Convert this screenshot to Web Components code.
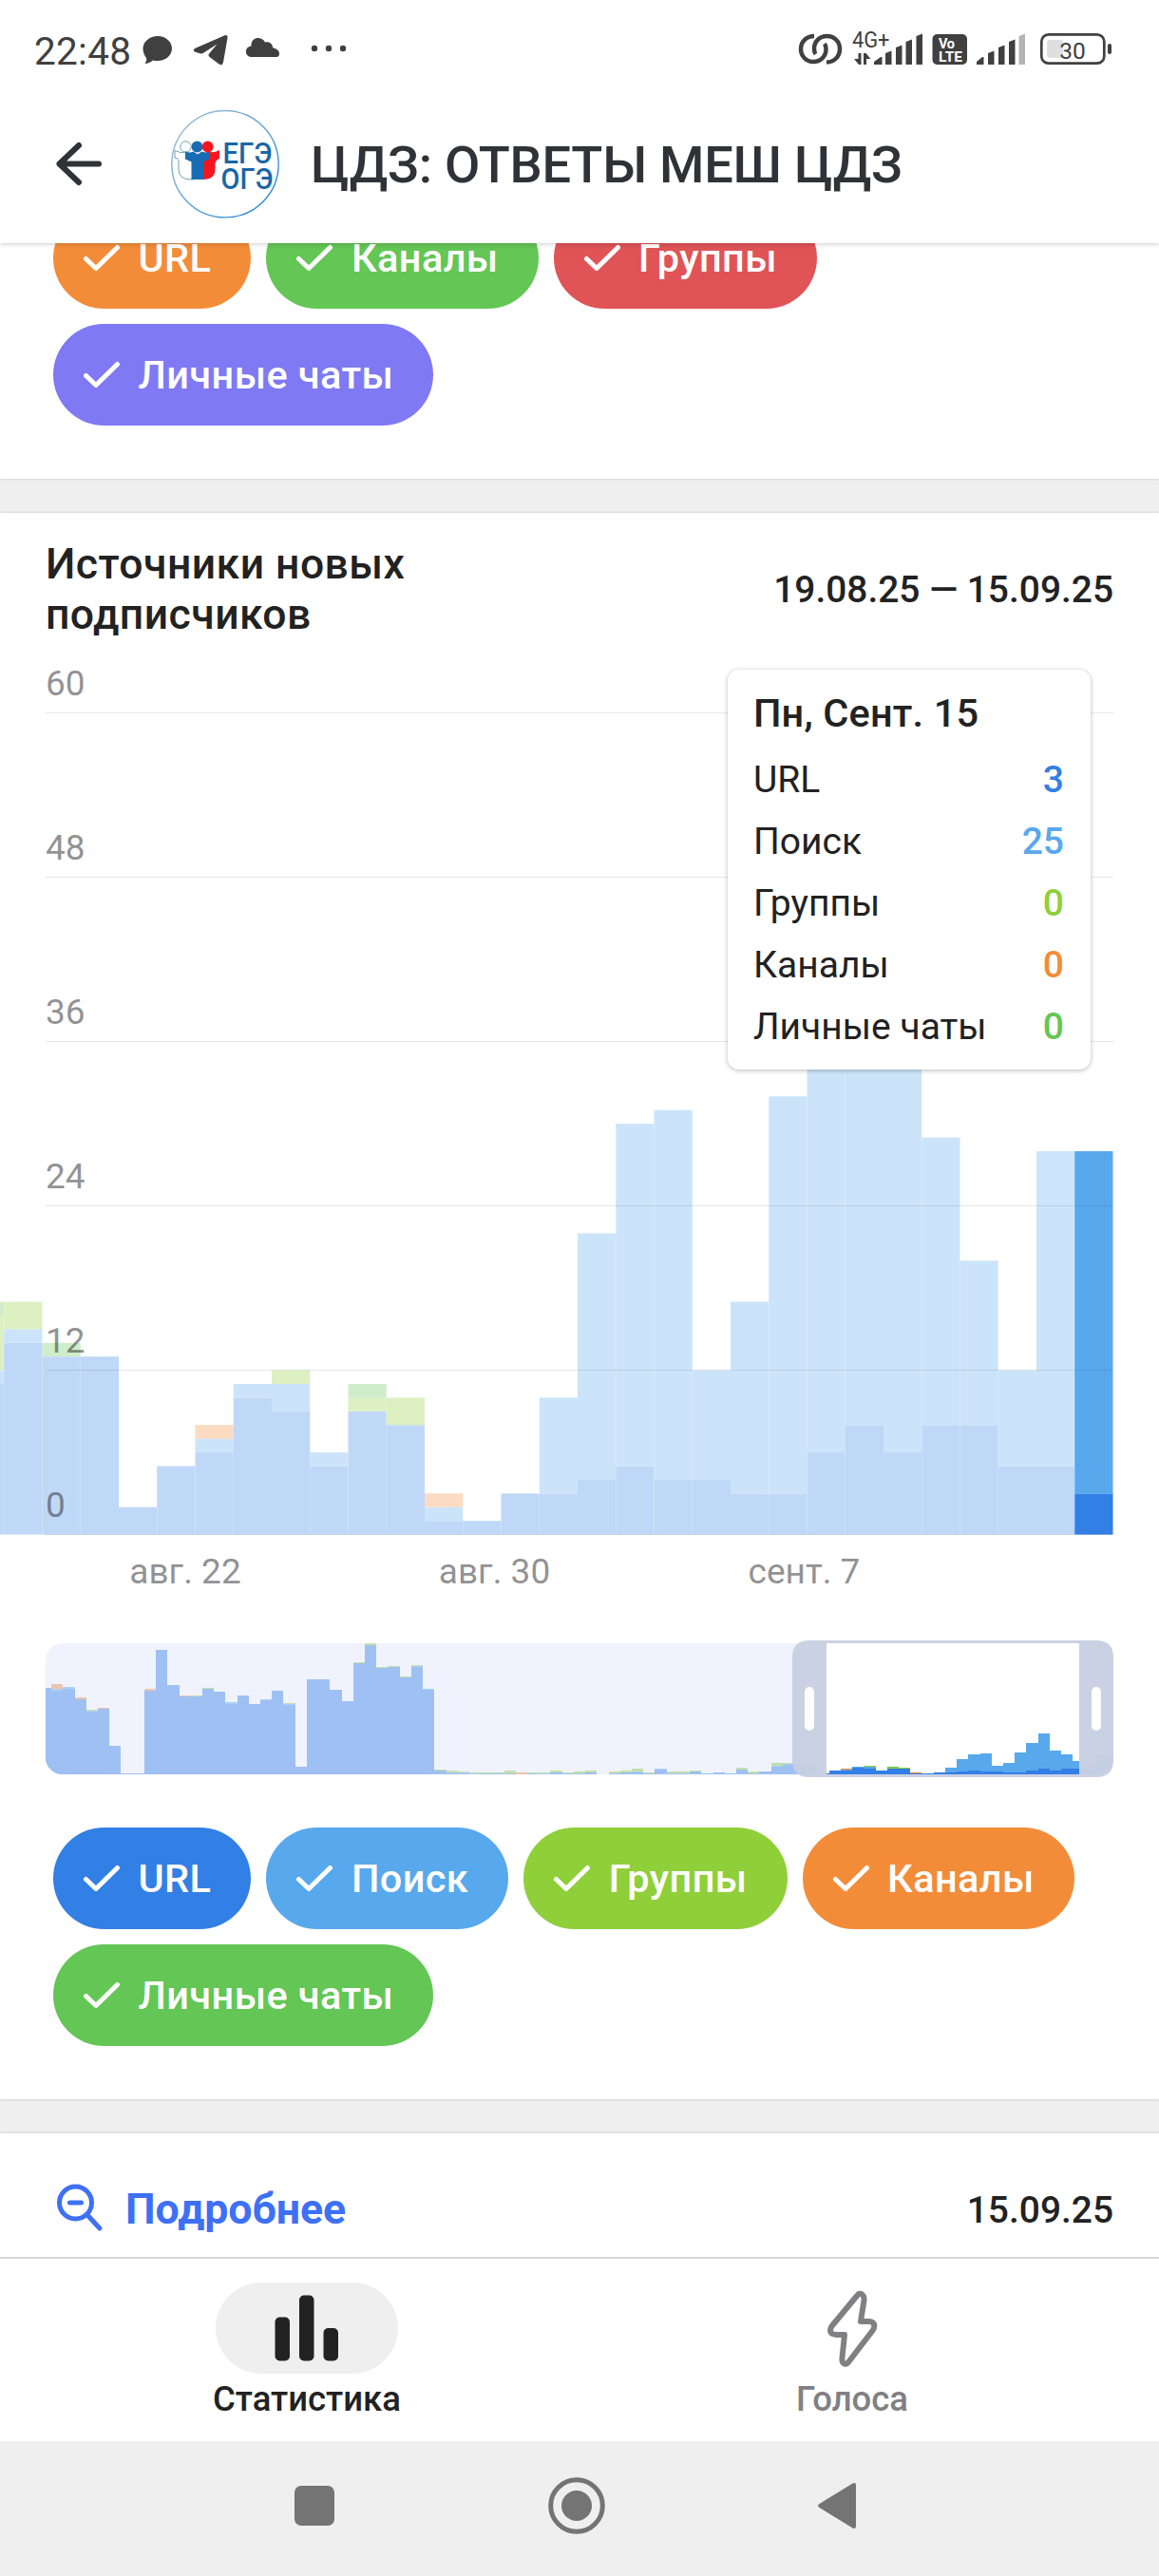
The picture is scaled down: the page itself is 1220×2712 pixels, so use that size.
<!DOCTYPE html>
<html lang="ru">
<head>
<meta charset="utf-8">
<title>Статистика</title>
<style>
  body {
    margin: 0;
    background: #fff;
    color: #222;
    font-family: Roboto, "Noto Sans", sans-serif;
  }
</style>
</head>
<body>

<stats-screen>
  <status-bar slot="top"></status-bar>
  <app-header slot="top">ЦДЗ: ОТВЕТЫ МЕШ ЦДЗ</app-header>

  <stats-card scrolled>
    <chip-list>
      <source-chip color="#f38c39">URL</source-chip>
      <source-chip color="#63c655">Каналы</source-chip>
      <source-chip color="#e05356">Группы</source-chip>
      <source-chip color="#7f79f3">Личные чаты</source-chip>
    </chip-list>
  </stats-card>

  <stats-card>
    <card-title range="19.08.25 — 15.09.25">Источники новых подписчиков</card-title>
    <sources-chart>
      <chart-tooltip>
        <span slot="title">Пн, Сент. 15</span>
        <tooltip-row value="3" color="#327fe5">URL</tooltip-row>
        <tooltip-row value="25" color="#58a8ed">Поиск</tooltip-row>
        <tooltip-row value="0" color="#8fcf39">Группы</tooltip-row>
        <tooltip-row value="0" color="#f38c39">Каналы</tooltip-row>
        <tooltip-row value="0" color="#63c655">Личные чаты</tooltip-row>
      </chart-tooltip>
    </sources-chart>
    <range-map></range-map>
    <chip-list>
      <source-chip color="#327fe5">URL</source-chip>
      <source-chip color="#58a8ed">Поиск</source-chip>
      <source-chip color="#8fcf39">Группы</source-chip>
      <source-chip color="#f38c39">Каналы</source-chip>
      <source-chip color="#63c655">Личные чаты</source-chip>
    </chip-list>
  </stats-card>

  <stats-card>
    <zoom-out-row date="15.09.25">Подробнее</zoom-out-row>
  </stats-card>

  <tab-bar slot="bottom">
    <tab-item active>
      <svg slot="icon" width="68" height="70" viewBox="0 0 68 70" fill="#222">
        <rect x="0.5" y="23.5" width="15.5" height="46" rx="5"/>
        <rect x="26" y="0.5" width="15.5" height="69" rx="5"/>
        <rect x="51.5" y="35" width="15.5" height="34.5" rx="5"/>
      </svg>
      Статистика
    </tab-item>
    <tab-item>
      <svg slot="icon" width="56" height="84" viewBox="0 0 56 84" fill="none" stroke="#808084" stroke-width="6" stroke-linejoin="round">
        <path d="M33 8 Q36 4 39 7 Q41 9 40.5 13 L37 35 H46 Q54 36 50 44 L24 78 Q21 81.5 18.5 78.5 Q17 77 17.5 73 L20 49 H11 Q2 48 6.5 40 Z"/>
      </svg>
      Голоса
    </tab-item>
  </tab-bar>
  <system-nav slot="bottom"></system-nav>
</stats-screen>

<script>
// attaches an open shadow root filled with the given markup
class BaseElement extends HTMLElement {
  constructor() {
    super();
    const template = document.createElement("template");
    template.innerHTML = this.render();
    this.attachShadow({ mode: "open" }).append(template.content.cloneNode(true));
  }
}

const COLORS = {
  url: "#327fe5",
  search: "#58a8ed",
  groups: "#8fcf39",
  channels: "#f38c39",
  personal: "#63c655",
};
const KEYS = ["url", "search", "groups", "channels", "personal"];

// url, search, groups, channels, personal for each day
const DAYS = [
  [11, 1, 4, 0, 1], [14, 1, 2], [13, 0, 0, 0, 1], [13], [2], [5],
  [6, 1, 0, 1], [10, 1], [9, 2, 1], [5, 1], [9, 0, 1, 0, 1], [8, 0, 2],
  [1, 1, 0, 1], [1], [3], [3, 7], [4, 18], [5, 25], [4, 27], [4, 8],
  [3, 14], [3, 29], [6, 40], [8, 52], [6, 29], [8, 21], [8, 12],
  [5, 7], [5, 23], [3, 25],
];

// earlier days, only visible on the map
const HISTORY = [
  [127], [123, 3, 0, 7], [126, 2, 0, 1], [110, 0, 0, 3], [93, 1, 1], [96, 0, 0, 1.5],
  [42], [1], [1], [123, 0, 0, 3], [183], [131], [114, 0, 0, 1.5], [114, 0, 1.5],
  [126, 0, 1.5], [121], [104, 2], [116], [104], [109, 1.5], [123], [102, 1.5, 1.5],
  [11], [139.5], [139.5], [124], [107], [163, 0.5, 1], [190, 0, 3], [156, 0, 1.5],
  [158, 0.7, 0.7], [142, 0, 1.5], [158, 1.5, 1.5], [124, 1.5], [5.5, 0, 1.3],
  [1.3, 1, 3], [1.3, 1, 1.5], [0.7, 1.3, 0.7], [1.3, 0.7, 0.5], [1.3, 0.7, 0.5],
  [1.3, 0.5, 3.3], [0.7, 0, 0, 1.5], [1.3, 0.7, 0.5], [0.7, 1.3, 0.5], [2.6, 0, 2.6],
  [1.3, 0.7, 0.5], [1.3, 0.5, 2], [2.5, 0, 2.7], [0], [1.3, 0.5, 2], [2.5, 0, 2.7],
  [2.6, 1, 4.5], [1.3, 0, 1.3], [6.5, 1.5], [1.2, 0.5, 2.3], [1.2, 0.5, 2.3],
  [4, 0, 1.3], [1.2], [2.5], [1.2], [6.5, 1.2, 1.7], [1.2, 0.5, 2.3], [4],
];

function stackedBars(days, left, width, base, unit) {
  let out = "";
  days.forEach((day, i) => {
    let y = base;
    day.forEach((value, k) => {
      if (!value) return;
      const h = value * unit;
      y -= h;
      out += `<rect x="${(left + i * width).toFixed(2)}" y="${y.toFixed(2)}" width="${width.toFixed(2)}" height="${h.toFixed(2)}" fill="${COLORS[KEYS[k]]}"/>`;
    });
  });
  return out;
}

class StatsScreen extends BaseElement {
  render() {
    return `
<style>
  :host { display: flex; flex-direction: column; width: 1220px; height: 2712px; overflow: hidden; background: #fff; }
  header { flex: none; position: relative; z-index: 1; height: 256px; background: #fff; box-shadow: 0 1px 5px rgba(0, 0, 0, .2); }
  main { flex: 1; min-height: 0; overflow: hidden; display: flex; flex-direction: column; gap: 36px; background: #efefef; }
  footer { flex: none; }
</style>
<header><slot name="top"></slot></header>
<main><slot></slot></main>
<footer><slot name="bottom"></slot></footer>`;
  }
}

class StatusBar extends BaseElement {
  render() {
    return `
<style>
  :host { display: flex; align-items: center; height: 90px; padding: 0 48px 0 36px; color: #404040; box-sizing: border-box; }
  .time { font-size: 40.5px; letter-spacing: .3px; line-height: 50px; width: 112px; padding-top: 18px; }
  .right { margin-left: auto; }
  svg { display: block; }
</style>
<span class="time">22:48</span>
<svg width="222" height="90" viewBox="148 0 222 90" fill="#404040">
  <path d="M166 38c8.5 0 15 6 15 13s-6.5 13-15 13c-2 0-3.5 0-5-.5-2.5 2-5.5 3.500-8.500 3.500 1.500-2 2-4 1.500-6-2-2.500-3.500-6-3.500-10 0-7 7-13 15.500-13z"/>
  <path d="M205 51 L236 37.5 Q240 36 239.5 40 L235 65.5 Q234 70 230 67 L220.5 60 Q218.5 58 220.5 56 L228.5 46.5 L214.5 55.5 Q212 57 209.5 56 L205 54.5 Q202.5 53 205 51z"/>
  <path d="M265 60c-8 0-8-11-.5-11.5C264 38 276 38 279 44.500c5-1 8 2 8 5.500 3 1 7 2.500 7 6.500 0 2.500-1 3.500-3 3.500z"/>
  <circle cx="331" cy="51" r="3.200"/><circle cx="346" cy="51" r="3.200"/><circle cx="361" cy="51" r="3.200"/>
</svg>
<svg class="right" width="334" height="90" viewBox="838 0 334 90" fill="#404040" font-family="Roboto, sans-serif">
  <g fill="none" stroke="#404040" stroke-width="4.5">
    <path d="M857 38c-8 0-14 6-14 13.5 0 8 6 13.5 13 13.5 8 0 13.5-6 13.5-13 0-2.500-.5-4.500-1.500-6"/>
    <path d="M870 65.500c8 0 14-6 14-14 0-8-6-13.500-13.500-13.500-8 0-13.500 6-13.500 13 0 2.500.5 4.500 1.500 6"/>
  </g>
  <text x="897" y="49.500" font-size="23" textLength="39.5" lengthAdjust="spacingAndGlyphs">4G+</text>
  <path d="M899 62h4.500v-6h3v12h-2.500zM909 56h2.500l5 6h-4.500v6h-3z"/>
  <path d="M920 68v-3l7-5h1.500v8zM932 68V56l6.500-2.500V68zM943 68V50l6.500-2.500V68zM953.500 68V44l6.500-2.500V68zM964.500 68V38l6.500-2.500V68z"/>
  <rect x="981.5" y="36" width="36.5" height="32" rx="5"/>
  <g fill="#fff" font-weight="700">
    <text x="988" y="50.5" font-size="14.5" textLength="17">Vo</text>
    <text x="988" y="64.5" font-size="15.5" textLength="25" lengthAdjust="spacingAndGlyphs">LTE</text>
  </g>
  <path d="M1028 68v-3l6-5h1.500v8zM1040 68V56l6.500-2.500V68zM1051 68V50l6.500-2.500V68zM1062 68V44l6.500-2.500V68z"/>
  <path d="M1072.500 68V38l6.500-2.500V68z" fill="#b4b4b4"/>
  <rect x="1096.3" y="36.3" width="66" height="30.4" rx="7.5" fill="none" stroke="#404040" stroke-width="2.7"/>
  <rect x="1102" y="42" width="17" height="19" rx="3" fill="#dfdfdf"/>
  <rect x="1166" y="46" width="4" height="11" rx="2"/>
  <text x="1129" y="61.5" font-size="24.5" text-anchor="middle">30</text>
</svg>`;
  }
}

class AppHeader extends BaseElement {
  render() {
    return `
<style>
  :host { display: flex; align-items: center; height: 166px; padding-left: 58px; box-sizing: border-box; }
  .back { margin-right: 70px; }
  .avatar { margin-right: 31px; }
  h1 { margin: 2px 0 0; font-size: 54.2px; letter-spacing: -.25px; line-height: 64px; font-weight: 500; color: #313238; white-space: nowrap; }
</style>
<svg class="back" width="50" height="50" viewBox="0 0 50 50" fill="none" stroke="#313238" stroke-width="6" stroke-linecap="round" stroke-linejoin="round">
  <path d="M4.5 24.5H46M25 5 4.5 24.5 25 44"/>
</svg>
<svg class="avatar" width="118" height="118" viewBox="178 114 118 118">
  <defs>
    <linearGradient id="ring" x1="0" y1="0" x2="1" y2="1">
      <stop offset="0" stop-color="#a5c4d6"/><stop offset="1" stop-color="#1b7fd0"/>
    </linearGradient>
  </defs>
  <circle cx="237" cy="172.7" r="56.2" fill="#fff" stroke="url(#ring)" stroke-width="1.4"/>
  <g fill="#fff" stroke="#6f9fae" stroke-width="1">
    <circle cx="195.5" cy="154.5" r="5.7"/>
    <path d="M184 158.500q6 3.500 13 1.500l6 5v24h-2q-13 0-13-11v-9q-1-3-4-3z"/>
  </g>
  <path d="M231 158q-6 3.500-12.500 1.500l-8 6v23.500h3q13 0 13-11v-6q1-4 4.500-5z" fill="#f5151f"/>
  <path d="M195 159.500q5 2 8.500 0l4.500 3 4.500-3q4 2 8 0v8l-6.500 3V189h-12.500v-18.500l-6.500-3z" fill="#176cb4"/>
  <circle cx="207.5" cy="154.5" r="5.9" fill="#176cb4"/>
  <circle cx="218.7" cy="154.5" r="5.9" fill="#f5151f"/>
  <g fill="#1a66a6" font-family="Roboto, sans-serif" font-weight="500" font-size="30.5">
    <text x="234.5" y="172" textLength="52" lengthAdjust="spacingAndGlyphs">ЕГЭ</text>
    <text x="232.5" y="199.2" textLength="55" lengthAdjust="spacingAndGlyphs">ОГЭ</text>
  </g>
</svg>
<h1><slot></slot></h1>`;
  }
}

class StatsCard extends BaseElement {
  render() {
    return `
<style>
  :host { display: block; flex: none; background: #fff; box-shadow: 0 0 3px rgba(0, 0, 0, .2); }
  :host([scrolled]) { margin-top: -38px; }
</style>
<slot></slot>`;
  }
}

class ChipList extends BaseElement {
  render() {
    return `
<style>
  :host { display: flex; flex-wrap: wrap; gap: 16px; padding: 0 56px 56px; }
</style>
<slot></slot>`;
  }
}

class SourceChip extends BaseElement {
  render() {
    return `
<style>
  :host { display: flex; align-items: center; height: 107px; padding: 0 42px 0 31px; box-sizing: border-box;
    border-radius: 54px; background: ${this.getAttribute("color")}; color: #fff;
    font-size: 41.5px; letter-spacing: .4px; font-weight: 500; line-height: 50px; white-space: nowrap; }
  svg { margin-right: 18.5px; }
</style>
<svg width="40" height="30" viewBox="0 0 40 30" fill="none" stroke="#fff" stroke-width="5" stroke-linecap="round" stroke-linejoin="round">
  <path d="M3.5 15.5 14 25.5 36.5 3.5"/>
</svg>
<slot></slot>`;
  }
}

class CardTitle extends BaseElement {
  render() {
    return `
<style>
  :host { display: flex; align-items: center; justify-content: space-between; height: 134px; padding: 27px 48px 0; box-sizing: border-box; }
  h2 { margin: 0; width: 480px; font-size: 44.5px; letter-spacing: .45px; line-height: 53px; font-weight: 500; }
  span { font-size: 38.9px; font-weight: 500; white-space: nowrap; }
</style>
<h2><slot></slot></h2>
<span>${this.getAttribute("range")}</span>`;
  }
}

class SourcesChart extends BaseElement {
  render() {
    const base = 941.6;
    const unit = 14.417;
    const width = 40.25;
    const left = 1171.5 - width * DAYS.length;
    const grid = [0, 12, 24, 36, 48, 60].map(v => {
      const y = base - v * unit;
      return `<rect x="48" y="${Math.floor(y)}" width="1124" height="1" fill="rgba(24,45,59,.11)"/>
        <text x="48" y="${(y - 18.5).toFixed(1)}">${v}</text>`;
    }).join("");
    const last = DAYS.length - 1;
    return `
<style>
  :host { display: block; position: relative; }
  svg { display: block; }
  text { font-size: 37px; fill: #252529; fill-opacity: .5; }
  ::slotted(chart-tooltip) { position: absolute; left: 766px; top: 31px; }
</style>
<svg width="1220" height="1050" viewBox="0 0 1220 1050">
  <g opacity=".3">${stackedBars(DAYS.slice(0, last), left, width, base, unit)}</g>
  ${stackedBars([DAYS[last]], left + last * width, width, base, unit)}
  ${grid}
  <g text-anchor="middle">
    <text x="195" y="993">авг. 22</text>
    <text x="520.5" y="993">авг. 30</text>
    <text x="846.5" y="993">сент. 7</text>
  </g>
</svg>
<slot></slot>`;
  }
}

class ChartTooltip extends BaseElement {
  render() {
    return `
<style>
  :host { display: block; width: 382px; height: 421px; padding: 13px 28px 0 27px; box-sizing: border-box;
    border-radius: 12px; background: #fff; box-shadow: 0 1px 5px rgba(0, 0, 0, .28); }
  .title { font-size: 41.5px; letter-spacing: .15px; line-height: 66px; font-weight: 500; margin-bottom: 5px; }
</style>
<div class="title"><slot name="title"></slot></div>
<slot></slot>`;
  }
}

class TooltipRow extends BaseElement {
  render() {
    return `
<style>
  :host { display: flex; justify-content: space-between; font-size: 39px; line-height: 65px; }
  b { font-weight: 500; color: ${this.getAttribute("color")}; }
</style>
<span><slot></slot></span><b>${this.getAttribute("value")}</b>`;
  }
}

class RangeMap extends BaseElement {
  render() {
    const all = HISTORY.concat(DAYS);
    // the first and the last day are cut in half by the edges
    const step = 1124 / (all.length - 1);
    return `
<style>
  :host { display: block; padding: 0 44px 48px; }
  svg { display: block; }
</style>
<svg width="1132" height="152" viewBox="44 1724 1132 152">
  <clipPath id="map"><rect x="48" y="1730" width="1124" height="138" rx="18"/></clipPath>
  <g clip-path="url(#map)">
    <g shape-rendering="crispEdges">${stackedBars(all, 48 - step / 2, step, 1868, 0.715)}</g>
    <rect x="48" y="1730" width="822" height="138" fill="rgba(230,235,252,.6)"/>
    <rect x="1136" y="1730" width="36" height="138" fill="rgba(230,235,252,.6)"/>
  </g>
  <path fill="#c7cee1" fill-opacity=".94" fill-rule="evenodd" d="M852 1727H1154Q1172 1727 1172 1745V1853Q1172 1871 1154 1871H852Q834 1871 834 1853V1745Q834 1727 852 1727zM870 1730V1868H1136V1730z"/>
  <rect x="847" y="1776" width="10" height="46" rx="5" fill="#fff"/>
  <rect x="1149" y="1776" width="10" height="46" rx="5" fill="#fff"/>
</svg>`;
  }
}

class ZoomOutRow extends BaseElement {
  render() {
    return `
<style>
  :host { display: flex; align-items: center; height: 160px; padding: 0 48px 0 58px; box-sizing: border-box; }
  svg { margin: -4px 22px 0 0; }
  a { color: #3e70f5; font-size: 44.7px; font-weight: 700; }
  span { margin-left: auto; font-size: 38.9px; font-weight: 500; }
</style>
<svg width="52" height="52" viewBox="0 0 52 52" fill="none" stroke="#3e70f5" stroke-width="5" stroke-linecap="round">
  <circle cx="21.5" cy="21" r="17"/>
  <path d="M15.5 21h12M34 34 47 48"/>
</svg>
<a><slot></slot></a>
<span>${this.getAttribute("date")}</span>`;
  }
}

class TabBar extends BaseElement {
  render() {
    return `
<style>
  :host { display: grid; grid-template-columns: 1fr 1fr; height: 194px; padding: 25px 36px 0; box-sizing: border-box;
    border-top: 2px solid #d9d9db; background: #fff; }
</style>
<slot></slot>`;
  }
}

class TabItem extends BaseElement {
  render() {
    return `
<style>
  :host { display: flex; flex-direction: column; align-items: center; font-size: 36.5px; line-height: 44px; font-weight: 500; color: #808084; }
  :host([active]) { color: #222; }
  .pill { display: flex; align-items: center; justify-content: center; width: 192px; height: 96px; border-radius: 48px; margin-bottom: 5px; }
  :host([active]) .pill { background: #efefef; }
</style>
<div class="pill"><slot name="icon"></slot></div>
<div><slot></slot></div>`;
  }
}

class SystemNav extends BaseElement {
  render() {
    return `
<style>
  :host { display: flex; align-items: center; height: 142px; padding: 0 0 6px 310px; box-sizing: border-box; background: #efefef; }
  svg { display: block; flex: none; }
  .home { margin: 0 224px 0 225px; }
</style>
<svg width="42" height="42" viewBox="0 0 42 42"><rect width="42" height="42" rx="7" fill="#747474"/></svg>
<svg class="home" width="60" height="60" viewBox="0 0 60 60">
  <circle cx="30" cy="30" r="27.3" fill="none" stroke="#747474" stroke-width="5"/>
  <circle cx="30" cy="30" r="16" fill="#747474"/>
</svg>
<svg width="40" height="50" viewBox="0 0 40 50"><path d="M36.5 1.5Q40 0 40 3.5V46.5Q40 50 36.5 48.5L1.5 27Q-1.5 25 1.5 23z" fill="#747474"/></svg>`;
  }
}

customElements.define("stats-screen", StatsScreen);
customElements.define("status-bar", StatusBar);
customElements.define("app-header", AppHeader);
customElements.define("stats-card", StatsCard);
customElements.define("chip-list", ChipList);
customElements.define("source-chip", SourceChip);
customElements.define("card-title", CardTitle);
customElements.define("sources-chart", SourcesChart);
customElements.define("chart-tooltip", ChartTooltip);
customElements.define("tooltip-row", TooltipRow);
customElements.define("range-map", RangeMap);
customElements.define("zoom-out-row", ZoomOutRow);
customElements.define("tab-bar", TabBar);
customElements.define("tab-item", TabItem);
customElements.define("system-nav", SystemNav);
</script>
</body>
</html>
